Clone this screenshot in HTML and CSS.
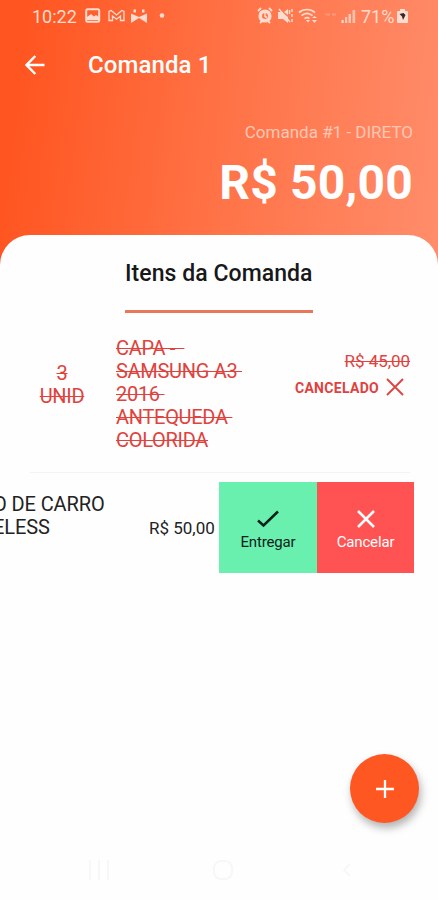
FILE: index.html
```html
<!DOCTYPE html>
<html lang="pt-BR">
<head>
<meta charset="utf-8">
<meta name="viewport" content="width=device-width, initial-scale=1">
<title>Comanda 1</title>
<link rel="stylesheet" href="styles.css">
</head>
<body>
<div class="phone">
  <header class="hero">
    <div class="status">
      <span class="clock">10:22</span>
      <svg class="status-left" width="84" height="20" viewBox="0 0 84 20" fill="none" stroke="currentColor">
        <rect x="1.2" y="3.2" width="13" height="12.600" rx="1.5" stroke-width="2"/>
        <path d="M2 14v-3l4-3 3 2.500 2-1.500 3 2v3z" fill="currentColor" stroke="none"/>
        <path d="M24 14.500V5.500l2.200-1 5.300 4.500 5.300-4.500 2.200 1v9h-3.500V10l-4 3.200-4-3.200v4.500z" stroke-width="1.300"/>
        <path d="M46 7.500l8 3.500 8-3.500v9.500l-8-5-8 5z" fill="currentColor" stroke="none"/><path d="M48.500 5h2.500M57 5h2.500" stroke-width="3"/>
        <circle cx="77" cy="9.500" r="2.300" fill="currentColor" stroke="none"/>
      </svg>
      <svg class="status-right" width="100" height="20" viewBox="0 0 100 20" fill="none" stroke="currentColor">
        <circle cx="8" cy="10" r="4.800" stroke-width="3.600"/><path d="M1 5l3-3M12 2l3 3M3 17l2-2M13 17l-2-2" stroke-width="1.800"/><path d="M8 7v3.500l2 1" stroke-width="1.400"/>
        <path d="M21 6h3.500L31 11v6l-5-4h-5zM27 6l4-3v6z" fill="currentColor" stroke="none"/><path d="M22 3l11 13M35 3v3M35 8v3M35 13v3M32.500 4v4" stroke-width="1.500"/>
        <path d="M42 6.500c4.500-4 11.500-4 16 0M44.500 9.700c3.500-3 7.500-3 11 0M47.500 12.700c1.700-1.400 3.500-1.400 5 0" stroke-width="1.700"/><path d="M49 14h4l-2 2.500zM55 12l2.500-2 2.500 2zM55 14l2.500 3 2.500-3z" fill="currentColor" stroke="none"/>
        <path d="M68.500 8.500h4.500M75 8.500h4" stroke-width="2" opacity=".3"/>
        <g stroke="none" fill="currentColor"><rect x="84.500" y="14" width="2.200" height="3"/><rect x="88" y="11" width="2.200" height="6" opacity=".8"/><rect x="91.500" y="8" width="2.500" height="9" opacity=".8"/><rect x="95.500" y="4" width="2.700" height="13" opacity=".7"/></g>
      </svg>
      <span class="percent">71%</span>
      <svg class="battery" width="11" height="16" viewBox="0 0 11 16"><path d="M3 1h5v2h2a1 1 0 0 1 1 1v10a1 1 0 0 1-1 1H1a1 1 0 0 1-1-1V4a1 1 0 0 1 1-1h2z" fill="currentColor"/><path d="M2.500 6l4-1 2 2-2.500 5-1-3.500z" fill="#33292a"/></svg>
    </div>
    <nav class="appbar">
      <svg class="back" width="20" height="20" viewBox="0 0 20 20" fill="none" stroke="currentColor" stroke-width="2.500"><path d="M19.500 10H1.800M10.300 1L1.500 10l8.800 9"/></svg>
      <h1>Comanda 1</h1>
    </nav>
    <div class="summary">
      <div class="order">Comanda #1 - DIRETO</div>
      <div class="total">R$ 50,00</div>
    </div>
  </header>
  <main class="sheet">
    <h2><span>Itens da Comanda</span></h2>
    <section class="item cancelled">
      <div class="qty">3
UNID</div>
      <div class="name">CAPA - &nbsp;
SAMSUNG A3 
2016 
ANTEQUEDA 
COLORIDA</div>
      <div class="side">
        <div class="old"><span>R$ 45,00</span></div>
        <div class="state"><span>CANCELADO</span><svg width="18" height="18" viewBox="0 0 18 18" fill="none" stroke="currentColor" stroke-width="1.800"><path d="M1 1l16 16M17 1L1 17"/></svg></div>
      </div>
    </section>
    <section class="item swiped">
      <div class="name">O DE CARRO
ELESS</div>
      <div class="price"><span>R$ 50,00</span></div>
      <button class="deliver"><svg width="22" height="18" viewBox="0 0 22 18" fill="none" stroke="currentColor" stroke-width="2.500"><path d="M1 10.500l5.500 5L21 1.500"/></svg><span>Entregar</span></button>
      <button class="cancel"><svg width="18" height="18" viewBox="0 0 18 18" fill="none" stroke="currentColor" stroke-width="2.500"><path d="M1 1l16 16M17 1L1 17"/></svg><span>Cancelar</span></button>
    </section>
  </main>
  <button class="fab"><svg width="18" height="18" viewBox="0 0 18 18" stroke="currentColor" stroke-width="2.300"><path d="M9 0v18M0 9h18"/></svg></button>
  <footer class="sysnav">
    <svg width="22" height="22" viewBox="0 0 22 22" stroke="currentColor" stroke-width="2"><path d="M2 1v20M11 1v20M20 1v20"/></svg>
    <svg width="22" height="22" viewBox="0 0 22 22" fill="none" stroke="currentColor" stroke-width="2"><rect x="2" y="2" width="18" height="18" rx="7"/></svg>
    <svg width="22" height="22" viewBox="0 0 22 22" fill="none" stroke="currentColor" stroke-width="2"><path d="M14 5l-6 6 6 6"/></svg>
  </footer>
</div>
</body>
</html>
```
FILE: styles.css
```css
* { box-sizing: border-box; }
body { margin: 0; font-family: Roboto, sans-serif; background: #fefefe; color: #222; }
h1, h2 { margin: 0; }
svg { display: block; flex: none; }
button { border: 0; padding: 0; font: inherit; }
.phone { width: 438px; height: 900px; overflow: hidden; display: flex; flex-direction: column; position: relative; }
.hero { height: 270px; flex: none; background: linear-gradient(97deg, #ff5520 5%, #ff7246 50%, #ff8d6b 100%); color: #fff; }
.status { height: 32px; display: flex; align-items: center; padding-left: 32px; color: #ffdccf; font-size: 18px; white-space: nowrap; }
.clock { width: 53px; }
.status-right { margin-left: 88px; }
.percent { margin-left: 4px; width: 36px; }
.battery { margin-left: 0; }
.appbar { height: 65px; display: flex; align-items: center; padding-left: 25px; }
.appbar h1 { margin-left: 43px; font-size: 24px; font-weight: 500; line-height: 30px; letter-spacing: .1px; padding-top: 1px; white-space: nowrap; }
.summary { padding: 25px 25px 0 0; text-align: right; white-space: nowrap; }
.order { font-size: 17px; line-height: 20px; color: #ffc7b4; }
.total { font-size: 48px; font-weight: 700; line-height: 56px; letter-spacing: .2px; margin-top: 13px; }
.sheet { flex: 1; margin-top: -35px; background: #fefefe; border-radius: 30px 30px 0 0; }
.sheet h2 { display: flex; justify-content: center; padding-top: 25px; font-size: 23px; line-height: 28px; font-weight: 500; letter-spacing: .06px; color: #18181a; white-space: nowrap; }
.sheet h2 span { width: 188px; padding-bottom: 22px; border-bottom: 3px solid #e87858; }
.item { display: flex; white-space: pre; }
.cancelled { height: 160px; margin: 0 28px 0 30px; padding-top: 24px; color: #e0423d; border-bottom: 1px solid #f3f3f3; }
.cancelled .qty { width: 64px; padding-top: 25px; text-align: center; }
.qty, .name { font-size: 20px; line-height: 23px; letter-spacing: -.3px; }
.qty, .cancelled .name, .old { text-decoration: line-through; text-decoration-thickness: 1px; }
.cancelled .name { margin-left: 22px; }
.side { margin-left: auto; padding-top: 13px; display: flex; flex-direction: column; align-items: flex-end; }
.old { font-size: 17px; line-height: 22px; letter-spacing: -.05px; }
.state { display: flex; align-items: center; gap: 7px; margin: 3px 6px 0 0; font-size: 14px; font-weight: 700; line-height: 20px; letter-spacing: .3px; }
.state span { padding-top: 3px; }
.swiped { height: 91px; margin-top: 9px; }
.swiped .name { width: 148px; margin-left: -7px; padding-top: 11px; letter-spacing: -.1px; }
.price { width: 78px; padding: 35px 0 0 8px; font-size: 17px; line-height: 22px; }
.deliver, .cancel { display: flex; flex-direction: column; align-items: center; justify-content: center; gap: 5px; font-size: 15px; line-height: 18px; letter-spacing: -.15px; padding-top: 6px; }
.deliver { width: 98px; background: #69f0ae; color: #0d2119; }
.cancel { width: 97px; background: #ff5252; color: #fff; }
.fab { position: absolute; left: 350px; top: 754px; width: 69px; height: 69px; border-radius: 50%; background: #ff5722; color: #fff; display: grid; place-items: center; box-shadow: 2px 5px 9px rgba(0,0,0,.3); }
.sysnav { height: 60px; display: flex; justify-content: space-between; align-items: center; padding: 0 80px 0 88px; color: #f7f7f7; }
```
